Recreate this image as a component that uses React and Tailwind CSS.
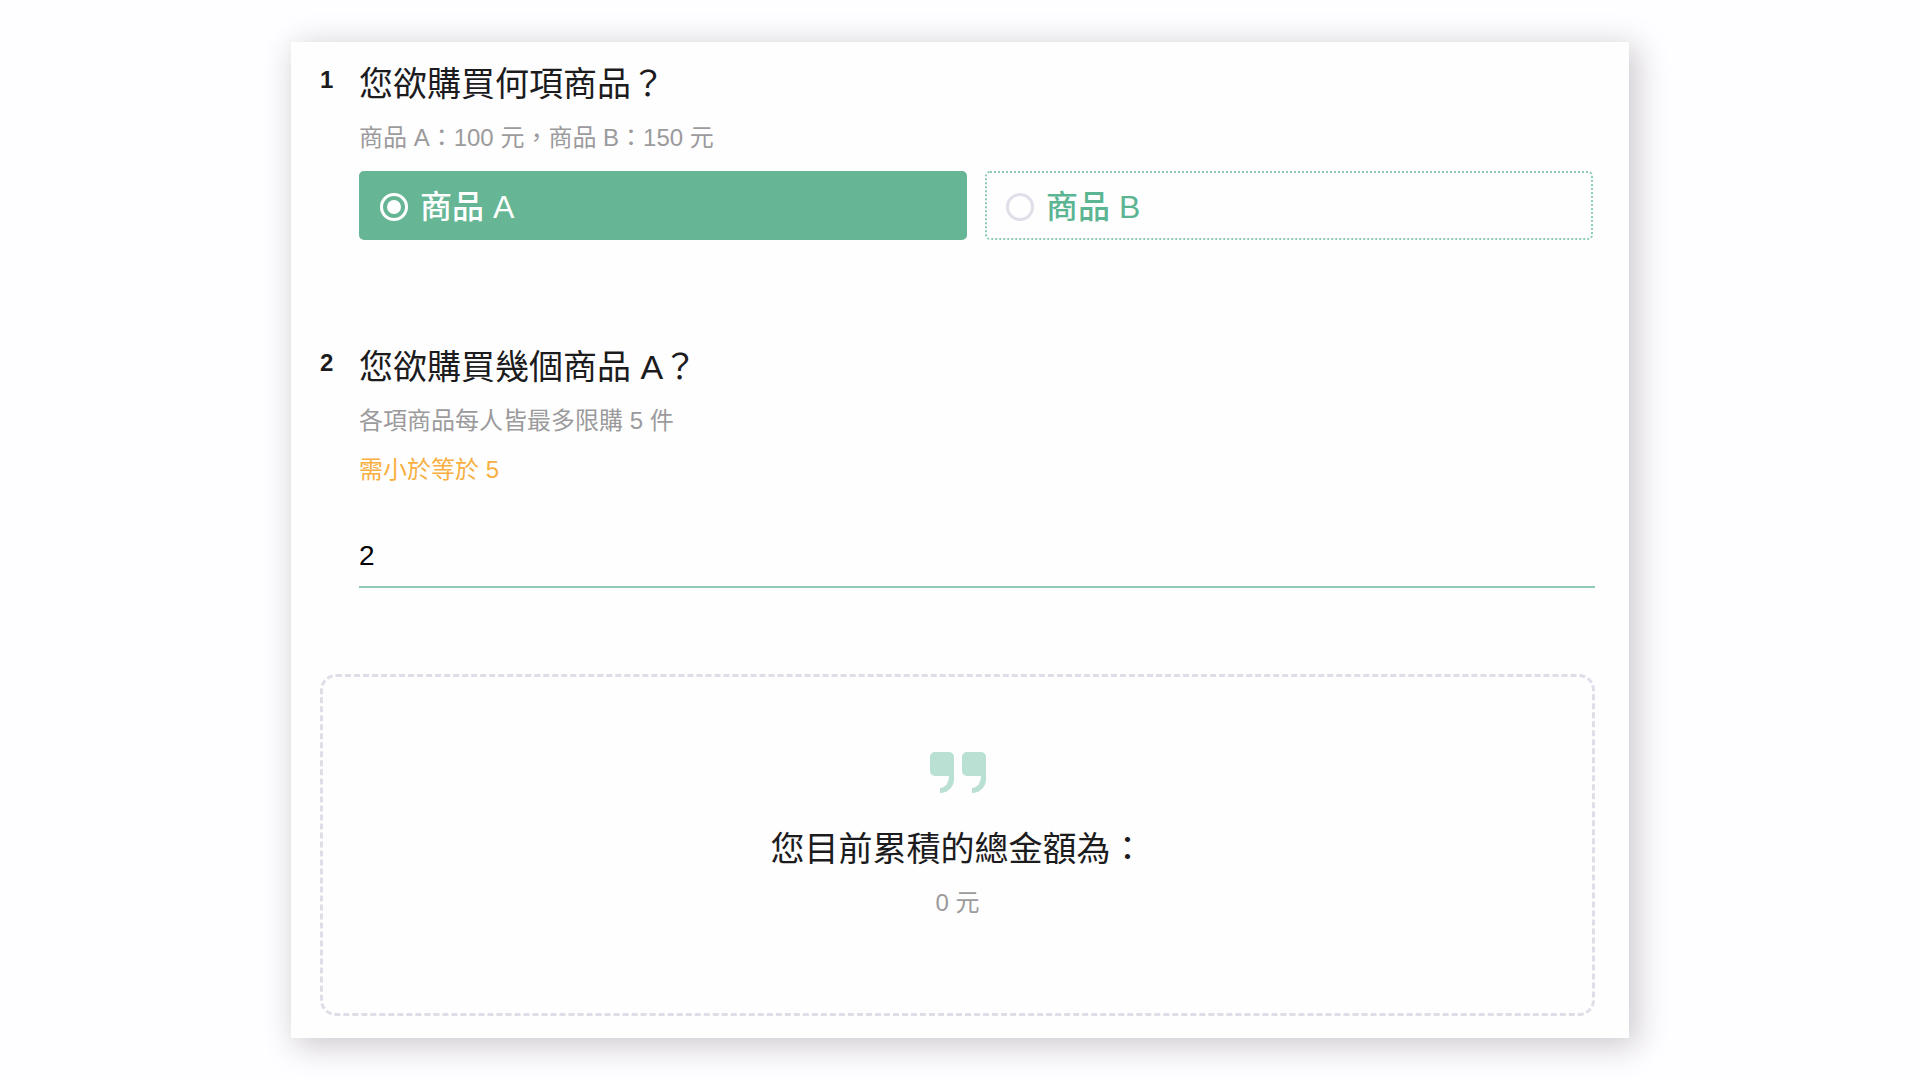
import React, { useState } from "react";

const options = [
  { value: "a", label: "商品 A" },
  { value: "b", label: "商品 B" },
];

const Question = ({ number, title, titleId, hint, children }) => (
  <section className="flex items-start">
    <span className="w-[39px] shrink-0 pt-1 text-2xl leading-8 font-bold">
      {number}
    </span>
    <div className="min-w-0 flex-1">
      <h2 id={titleId} className="text-[34px] leading-12">
        {title}
      </h2>
      <p className="mt-3 text-2xl leading-9 text-[#9b9a9c]">{hint}</p>
      {children}
    </div>
  </section>
);

const QuoteMark = () => (
  <svg width="56" height="41" viewBox="0 0 56 41" fill="#b9e0d3" aria-hidden="true">
    <path d="M5 0h14a5 5 0 0 1 5 5v22c0 8-6 14-14 14v-5c5 0 9-5 9-12H5a5 5 0 0 1-5-5V5a5 5 0 0 1 5-5z" />
    <path d="M37 0h14a5 5 0 0 1 5 5v22c0 8-6 14-14 14v-5c5 0 9-5 9-12H37a5 5 0 0 1-5-5V5a5 5 0 0 1 5-5z" />
  </svg>
);

const OptionCard = ({ option, checked, onChange }) => (
  <label
    className={`flex h-[69px] flex-1 cursor-pointer items-center gap-3 rounded-[5px] border-2 pt-0.5 pl-[19px] text-[32px] leading-10 font-medium ${
      checked
        ? "border-[#66b695] bg-[#66b695] text-white"
        : "border-dotted border-[#8dcbb5] text-[#5bb592]"
    }`}
  >
    <input
      type="radio"
      name="product"
      value={option.value}
      checked={checked}
      onChange={() => onChange(option.value)}
      className="flex size-7 shrink-0 appearance-none items-center justify-center rounded-full border-3 border-[#e0dee8] checked:border-white checked:before:size-3.5 checked:before:rounded-full checked:before:bg-white checked:before:content-['']"
    />
    {option.label}
  </label>
);

const App = () => {
  const [product, setProduct] = useState("a");
  const [amount, setAmount] = useState("2");

  return (
    <div className="min-h-screen bg-[#fefdff] px-6 py-[42px] font-['Liberation_Sans','Noto_Sans_CJK_TC',sans-serif] text-[#1c1b1d]">
      <main
        lang="zh-Hant"
        className="mx-auto max-w-[1338px] bg-[#fefefe] pt-[18px] pr-[34px] pb-[22px] pl-[29px] shadow-[6px_6px_30px_2px_rgba(30,25,35,0.22)]"
      >
        {/* Product choice */}
        <Question
          number="1"
          title="您欲購買何項商品？"
          titleId="product-title"
          hint="商品 A：100 元，商品 B：150 元"
        >
          <div
            role="radiogroup"
            aria-labelledby="product-title"
            className="mt-[15px] flex gap-[18px] pr-0.5"
          >
            {options.map((option) => (
              <OptionCard
                key={option.value}
                option={option}
                checked={product === option.value}
                onChange={setProduct}
              />
            ))}
          </div>
        </Question>

        {/* Amount */}
        <div className="mt-[103px]">
          <Question
            number="2"
            title="您欲購買幾個商品 A？"
            titleId="amount-title"
            hint="各項商品每人皆最多限購 5 件"
          >
            <p className="mt-[13px] text-2xl leading-9 text-[#f8b042]">需小於等於 5</p>
            <input
              type="text"
              inputMode="numeric"
              aria-labelledby="amount-title"
              value={amount}
              onChange={(e) => setAmount(e.target.value)}
              className="mt-[38px] block h-[62px] w-full border-b-2 border-[#8dcbb5] text-[28px] leading-10 text-black outline-none"
            />
          </Question>
        </div>

        {/* Total */}
        <section className="mt-[86px] flex flex-col items-center rounded-2xl border-3 border-dashed border-[#dfdde8] pt-[75px] pb-[92px] text-center">
          <QuoteMark />
          <h2 className="mt-8 text-[34px] leading-12">您目前累積的總金額為：</h2>
          <p className="mt-3 text-2xl leading-9 text-[#9b9a9c]">0 元</p>
        </section>
      </main>
    </div>
  );
};

export default App;
